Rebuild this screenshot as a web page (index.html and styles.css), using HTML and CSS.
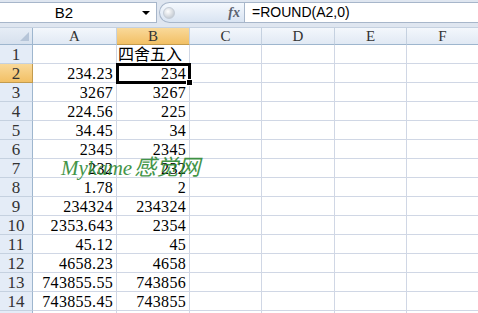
FILE: index.html
```html
<!DOCTYPE html>
<html lang="zh-CN">
<head>
    <meta charset="UTF-8">
    <title>四舍五入</title>
    <link rel="stylesheet" href="styles.css">
</head>
<body>
    <div class="formula-bar">
        <div class="name-box">
            <span class="cell-ref">B2</span>
            <span class="drop"></span>
        </div>
        <div class="pill">
            <span class="knob"></span>
            <span class="fx">fx</span>
        </div>
        <div class="formula">=ROUND(A2,0)</div>
    </div>

    <div class="sheet">
        <div class="grid">
            <div class="corner"><span class="tri"></span></div>
            <div class="col-head">A</div>
            <div class="col-head active">B</div>
            <div class="col-head">C</div>
            <div class="col-head">D</div>
            <div class="col-head">E</div>
            <div class="col-head">F</div>
        </div>
        <div id="rows"></div>
        <div class="watermark">Mykame<span class="wm-cn">感觉网</span></div>
    </div>

    <script>
        const data = [
            ['', '四舍五入'],
            ['234.23', '234'],
            ['3267', '3267'],
            ['224.56', '225'],
            ['34.45', '34'],
            ['2345', '2345'],
            ['232', '232'],
            ['1.78', '2'],
            ['234324', '234324'],
            ['2353.643', '2354'],
            ['45.12', '45'],
            ['4658.23', '4658'],
            ['743855.55', '743856'],
            ['743855.45', '743855'],
            ['', '']
        ];
        const rows = document.getElementById('rows');
        data.forEach(function(r, i) {
            const row = document.createElement('div');
            row.className = 'grid';
            const head = document.createElement('div');
            head.className = 'row-head' + (i === 1 ? ' active' : '');
            // the last row only peeks in at the bottom edge
            head.textContent = i < 14 ? i + 1 : '';
            row.appendChild(head);
            for (let c = 0; c < 6; c++) {
                const cell = document.createElement('div');
                cell.className = 'cell';
                cell.textContent = r[c] || '';
                if (i === 0 && c === 1) cell.classList.add('text');
                if (i === 1 && c === 1) {
                    cell.classList.add('selected');
                    const h = document.createElement('span');
                    h.className = 'handle';
                    cell.appendChild(h);
                }
                row.appendChild(cell);
            }
            rows.appendChild(row);
        });
    </script>
</body>
</html>
```

FILE: styles.css
```css
body {
    margin: 0;
    width: 478px;
    height: 313px;
    overflow: hidden;
    background: #fff;
    font-family: "Liberation Sans", Arial, sans-serif;
}
.formula-bar {
    display: flex;
    height: 28px;
    box-sizing: border-box;
    padding: 2px 0 4px 0;
    background: #dfe6f0;
    border-bottom: 1px solid #c5d1e0;
}
.name-box {
    width: 157px;
    box-sizing: border-box;
    background: #fff;
    border: 1px solid #a7b6ca;
    border-left: none;
    display: flex;
    align-items: center;
}
.cell-ref {
    flex: 1;
    text-align: center;
    font-size: 15px;
    color: #000;
    padding-right: 14px;
}
.drop {
    width: 0;
    height: 0;
    border-left: 4px solid transparent;
    border-right: 4px solid transparent;
    border-top: 4px solid #000;
    margin-right: 6px;
}
.pill {
    width: 85px;
    margin-left: 2px;
    box-sizing: border-box;
    border: 1px solid #a7b6ca;
    border-right: none;
    border-radius: 11px 0 0 11px;
    background: linear-gradient(#f4f8fd, #d9e4f2);
    display: flex;
    align-items: center;
    justify-content: space-between;
    padding: 0 4px 0 3px;
}
.knob {
    width: 10px;
    height: 10px;
    border-radius: 50%;
    background: radial-gradient(circle at 40% 35%, #ffffff, #b4bcc6);
    border: 1px solid #c4ccd6;
}
.fx {
    font-family: "Liberation Serif", serif;
    font-style: italic;
    font-weight: bold;
    font-size: 14px;
    color: #5a6270;
}
.formula {
    flex: 1;
    background: #fff;
    border: 1px solid #a7b6ca;
    border-right: none;
    font-size: 14px;
    line-height: 19px;
    padding-left: 7px;
}
.sheet {
    position: relative;
}
.grid {
    display: grid;
    grid-template-columns: 33px 84px 73px 72px 73px 72px 72px;
}
.corner,
.col-head {
    height: 17px;
    box-sizing: border-box;
    border-right: 1px solid #c5d1e0;
    border-bottom: 1px solid #9eb6ce;
    background: linear-gradient(#f3f7fc, #e1e9f4);
    font-family: "Liberation Serif", serif;
    font-size: 15px;
    line-height: 17px;
    text-align: center;
    color: #333;
}
.corner {
    position: relative;
    border-right: 1px solid #9eb6ce;
    background: linear-gradient(#e6edf6, #d7e1ee);
}
.tri {
    position: absolute;
    right: 3px;
    bottom: 3px;
    width: 0;
    height: 0;
    border-left: 9px solid transparent;
    border-bottom: 9px solid #b6c5d8;
}
.col-head.active,
.row-head.active {
    background: linear-gradient(#f9d99a, #f2c065);
    border-bottom-color: #c29b4e;
}
.row-head {
    height: 19px;
    box-sizing: border-box;
    border-right: 1px solid #9eb6ce;
    border-bottom: 1px solid #c5d1e0;
    background: #e4ecf7;
    font-family: "Liberation Serif", serif;
    font-size: 17px;
    line-height: 19px;
    text-align: center;
    color: #333;
}
.row-head.active {
    border-right-color: #c29b4e;
}
.cell {
    height: 19px;
    box-sizing: border-box;
    border-right: 1px solid #d0d7e5;
    border-bottom: 1px solid #d0d7e5;
    font-family: "Liberation Serif", serif;
    font-size: 16px;
    letter-spacing: 0.3px;
    line-height: 19px;
    text-align: right;
    padding-right: 3px;
    color: #000;
    white-space: nowrap;
    position: relative;
}
.cell.text {
    text-align: left;
    padding-left: 1px;
    letter-spacing: 0;
    font-family: "Noto Sans CJK SC", sans-serif;
    line-height: 17px;
}
.cell.selected {
    outline: 3px solid #000;
    outline-offset: -2px;
    z-index: 1;
}
.handle {
    position: absolute;
    right: -4px;
    bottom: -4px;
    width: 5px;
    height: 5px;
    background: #000;
    border: 1px solid #fff;
}
.watermark {
    position: absolute;
    left: 61px;
    top: 121px;
    font-family: "Liberation Serif", serif;
    font-style: italic;
    font-size: 21px;
    color: #2f8a34;
    opacity: 0.9;
    pointer-events: none;
    white-space: nowrap;
}
.wm-cn {
    font-family: "Noto Sans CJK SC", sans-serif;
    font-size: 22px;
    margin-left: 2px;
}
```
